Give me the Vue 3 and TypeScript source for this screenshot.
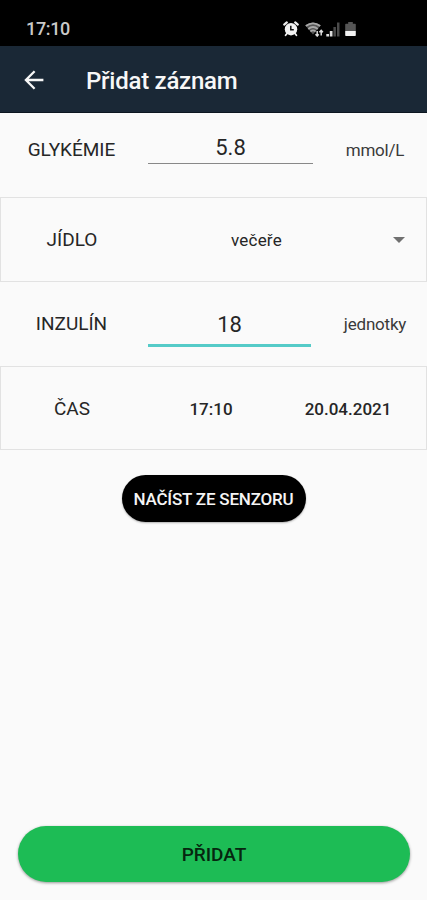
<script setup lang="ts">
import { ref } from 'vue'

const glucose = ref<string>('5.8')
const insulin = ref<string>('18')
const meal = ref<string>('večeře')
const time = ref<string>('17:10')
const date = ref<string>('20.04.2021')
</script>

<template>
  <div class="screen">
    <div class="status">
      <span class="clock">17:10</span>
      <div class="status-icons">
        <svg class="alarm" width="16" height="16" viewBox="0 0 16 16">
          <path d="M1.200 3.600 3.800 1.400M14.800 3.600 12.200 1.400" stroke="#eee" stroke-width="2.200" stroke-linecap="round" />
          <path d="M4 12.500 2.600 14.200M12 12.500l1.400 1.700" stroke="#eee" stroke-width="1.800" stroke-linecap="round" />
          <circle cx="8" cy="8.200" r="6.200" fill="#f2f2f2" />
          <path d="M7.800 4.800v4h3" fill="none" stroke="#111" stroke-width="1.500" />
        </svg>
        <svg class="wifi" width="19" height="15" viewBox="0 0 19 15">
          <path d="M.3 3.200Q8 -2 15.700 3.200L8 12.400z" fill="#555" />
          <g fill="none" stroke="#a8a8a8" stroke-width="1.700">
            <path d="M.8 4Q8 -1.400 15.200 4" />
            <path d="M3.200 7Q8 3 12.800 7" />
            <path d="M5.400 9.500Q8 7.300 10.600 9.500" />
          </g>
          <path d="M12.200 9v5M10.500 12.200l1.700 1.800 1.500-1.800M16.200 13.600V8.400M14.400 10.300l1.800-1.900 1.700 1.900" fill="none" stroke="#ddd" stroke-width="1.500" />
        </svg>
        <svg class="signal" width="14" height="15" viewBox="0 0 14 15">
          <path d="M.3 12h2.700v2.500H.3zM3.800 9h2.700v5.500H3.800z" fill="#ddd" />
          <path d="M7.400 5h2.500v9.500H7.400zM11 .5h2.500v14H11z" fill="#4b4b4b" />
        </svg>
        <svg class="battery" width="11" height="15" viewBox="0 0 11 15">
          <path d="M3.200 0h4.600v1.800H10a.8.8 0 0 1 .8.8V9H.2V2.600A.8.8 0 0 1 1 1.800h2.200z" fill="#555" />
          <path d="M.2 9h10.600v4.200a.8.8 0 0 1-.8.8H1a.8.8 0 0 1-.8-.8z" fill="#f2f2f2" />
        </svg>
      </div>
    </div>

    <header class="appbar">
      <svg class="back" width="20" height="20" viewBox="0 0 20 20">
        <path d="M19.400 10H2M10.600 1.300 1.900 10l8.700 8.700" fill="none" stroke="#f7f7f7" stroke-width="2.300" />
      </svg>
      <h1 class="title">Přidat záznam</h1>
    </header>

    <main class="form">
      <div class="row">
        <span class="label">GLYKÉMIE</span>
        <div class="field"><span class="value">{{ glucose }}</span></div>
        <span class="unit">mmol/L</span>
      </div>
      <div class="row boxed">
        <span class="label">JÍDLO</span>
        <div class="select">
          <span class="choice">{{ meal }}</span>
          <svg class="caret" width="12" height="6" viewBox="0 0 12 6"><path d="M0 0h12L6 6z" fill="#707070" /></svg>
        </div>
      </div>
      <div class="row">
        <span class="label">INZULÍN</span>
        <div class="field focused"><span class="value">{{ insulin }}</span></div>
        <span class="unit">jednotky</span>
      </div>
      <div class="row boxed moment">
        <span class="label">ČAS</span>
        <span class="time">{{ time }}</span>
        <span class="date">{{ date }}</span>
      </div>
      <button class="sensor" type="button"><span>NAČÍST ZE SENZORU</span></button>
    </main>

    <button class="submit" type="button"><span>PŘIDAT</span></button>
  </div>
</template>

<style>
body {
  background: #fafafa;
}
</style>

<style scoped>
.screen {
  box-sizing: border-box;
  display: flex;
  flex-direction: column;
  height: 900px;
  padding-bottom: 18px;
  overflow: hidden;
  background: #fafafa;
  color: #262626;
  font-family: Roboto, "Noto Sans", sans-serif;
}
.status {
  box-sizing: border-box;
  display: flex;
  align-items: center;
  justify-content: space-between;
  height: 46px;
  padding: 12px 71px 0 26px;
  background: #000;
}
.clock {
  color: #c9c9c9;
  font-size: 18px;
  font-weight: 500;
  line-height: 20px;
  letter-spacing: -0.35px;
}
.status-icons {
  display: flex;
  align-items: center;
}
.wifi {
  margin-left: 6px;
}
.signal {
  margin-left: 2px;
}
.battery {
  margin-left: 5px;
}
.appbar {
  box-sizing: border-box;
  display: flex;
  align-items: center;
  height: 67px;
  padding: 2px 24px 0;
  border-bottom: 1px solid #0c1620;
  background: #1a2836;
}
.title {
  margin: 2px 0 0 42px;
  color: #f7f7f7;
  font-size: 24px;
  font-weight: 500;
  line-height: 30px;
  letter-spacing: -0.25px;
  white-space: nowrap;
}
.form {
  display: flex;
  flex: 1;
  flex-direction: column;
}
.row {
  box-sizing: border-box;
  display: grid;
  grid-template-columns: 143px 175px 1fr;
  align-items: center;
  height: 84px;
}
.row.boxed {
  grid-template-columns: 142px 137px 1fr;
  height: 85px;
  border: 1px solid #e2e2e2;
}
.row.moment {
  height: 84px;
  padding-top: 2px;
}
.label {
  font-size: 19px;
  line-height: 24px;
  text-align: center;
  white-space: nowrap;
}
.row:first-child .label,
.row:first-child .unit {
  margin-top: -10px;
}
.field {
  box-sizing: border-box;
  align-self: start;
  width: 165px;
  height: 51px;
  margin-left: 5px;
  padding-top: 22px;
  border-bottom: 1.5px solid #888;
  text-align: center;
}
.field.focused {
  width: 163px;
  height: 65px;
  padding-top: 30px;
  border-bottom: 3px solid #55cbc8;
}
.value {
  font-size: 22px;
  line-height: 26px;
}
.unit {
  padding-left: 5px;
  color: #3a3a3a;
  font-size: 17px;
  line-height: 22px;
  letter-spacing: -0.2px;
  text-align: center;
  white-space: nowrap;
}
.select {
  display: flex;
  grid-column: 2 / 4;
  align-items: center;
  justify-content: space-between;
  padding: 0 21px 0 88px;
}
.choice,
.time,
.date {
  font-size: 17px;
  line-height: 22px;
}
.choice {
  letter-spacing: 0.2px;
}
.time,
.date {
  font-weight: 500;
  text-align: center;
}
.time {
  padding-right: 1px;
}
.date {
  padding-right: 10px;
}
.sensor {
  align-self: center;
  width: 184px;
  height: 47px;
  margin-top: 25px;
  padding: 0;
  border: 0;
  border-radius: 24px;
  background: #000;
  box-shadow: 0 1px 2px rgba(0, 0, 0, 0.3);
  color: #f5f5f5;
  font: 500 17px/24px Roboto, sans-serif;
  letter-spacing: -0.2px;
  white-space: nowrap;
}
.submit {
  height: 56px;
  margin: 0 17px 0 18px;
  padding: 2px 0 0;
  border: 0;
  border-radius: 28px;
  background: #1dbc55;
  box-shadow: 0 1px 3px rgba(0, 0, 0, 0.4);
  color: #06260f;
  font: 500 19px/24px Roboto, sans-serif;
}
</style>
